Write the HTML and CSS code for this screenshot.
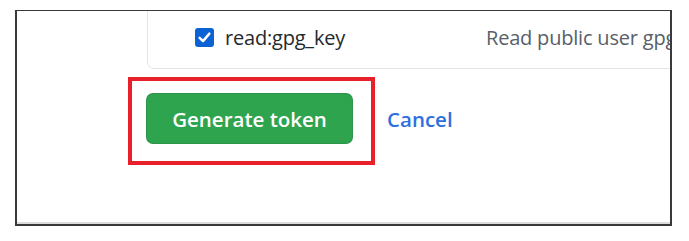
FILE: index.html
```html
<!DOCTYPE html>
<html lang="en">
<head>
<meta charset="utf-8">
<title>New personal access token</title>
<link rel="stylesheet" href="styles.css">
</head>
<body>
  <div class="frame">
    <div class="scopes">
      <div class="scope-row">
        <label class="scope-name">
          <span class="check">
            <svg viewBox="0 0 19 19" width="19" height="19" aria-hidden="true">
              <rect x="0" y="0" width="19" height="19" rx="3" fill="#0b62d4"/>
              <path d="M4.6 9.8 L8 13.1 L14.4 5.6" fill="none" stroke="#fff" stroke-width="2.4" stroke-linecap="round" stroke-linejoin="round"/>
            </svg>
          </span>
          <span class="scope-label">read:gpg_key</span>
        </label>
        <span class="scope-desc">Read public user gpg keys</span>
      </div>
    </div>
    <div class="actions">
      <div class="highlight">
        <button class="btn-primary" type="button">Generate token</button>
      </div>
      <a class="cancel" href="#">Cancel</a>
    </div>
  </div>
</body>
</html>
```
FILE: styles.css
```css
* { box-sizing: border-box; }

html, body {
  margin: 0;
  background: #ffffff;
}

body {
  padding: 10px 0 0 15px;
  font-family: "Open Sans", "Noto Sans", "Liberation Sans", sans-serif;
}

.frame {
  width: 657px;
  height: 216px;
  border: 2px solid #3a3a3a;
  border-top-width: 1px;
  box-shadow: inset 0 -2px 0 #dcdcdc;
  overflow: hidden;
  background: #fff;
}

.scopes {
  width: 700px;
  margin: -31px 0 0 130px;
  border: 1px solid #e1e4e8;
  border-radius: 7px;
  padding: 46px 0 21px 47px;
}

.scope-row {
  display: flex;
  align-items: center;
  height: 20px;
}

.scope-name {
  display: flex;
  align-items: center;
  width: 291px;
  flex: none;
}

.check {
  display: block;
  width: 19px;
  height: 19px;
  margin-right: 11px;
}

.check svg { display: block; }

.scope-label {
  font-size: 20px;
  letter-spacing: -0.2px;
  color: #24292e;
  white-space: nowrap;
}

.scope-desc {
  font-size: 20px;
  letter-spacing: -0.2px;
  color: #586069;
  white-space: nowrap;
}

.actions {
  display: flex;
  align-items: center;
  margin: 8px 0 0 111px;
}

.highlight {
  border: 4px solid #e8202a;
  padding: 12px 18px 17px 14px;
}

.btn-primary {
  display: block;
  width: 207px;
  height: 51px;
  border: 1px solid rgba(27, 31, 35, 0.12);
  border-radius: 7px;
  background: #2ea44f;
  color: #ffffff;
  font-family: "Open Sans", "Noto Sans", "Liberation Sans", sans-serif;
  font-size: 20.5px;
  font-weight: 600;
  padding: 0;
  cursor: pointer;
}

.cancel {
  margin: 0 0 4px 12px;
  font-size: 20.5px;
  font-weight: 600;
  color: #2f6fdd;
  text-decoration: none;
}
```
